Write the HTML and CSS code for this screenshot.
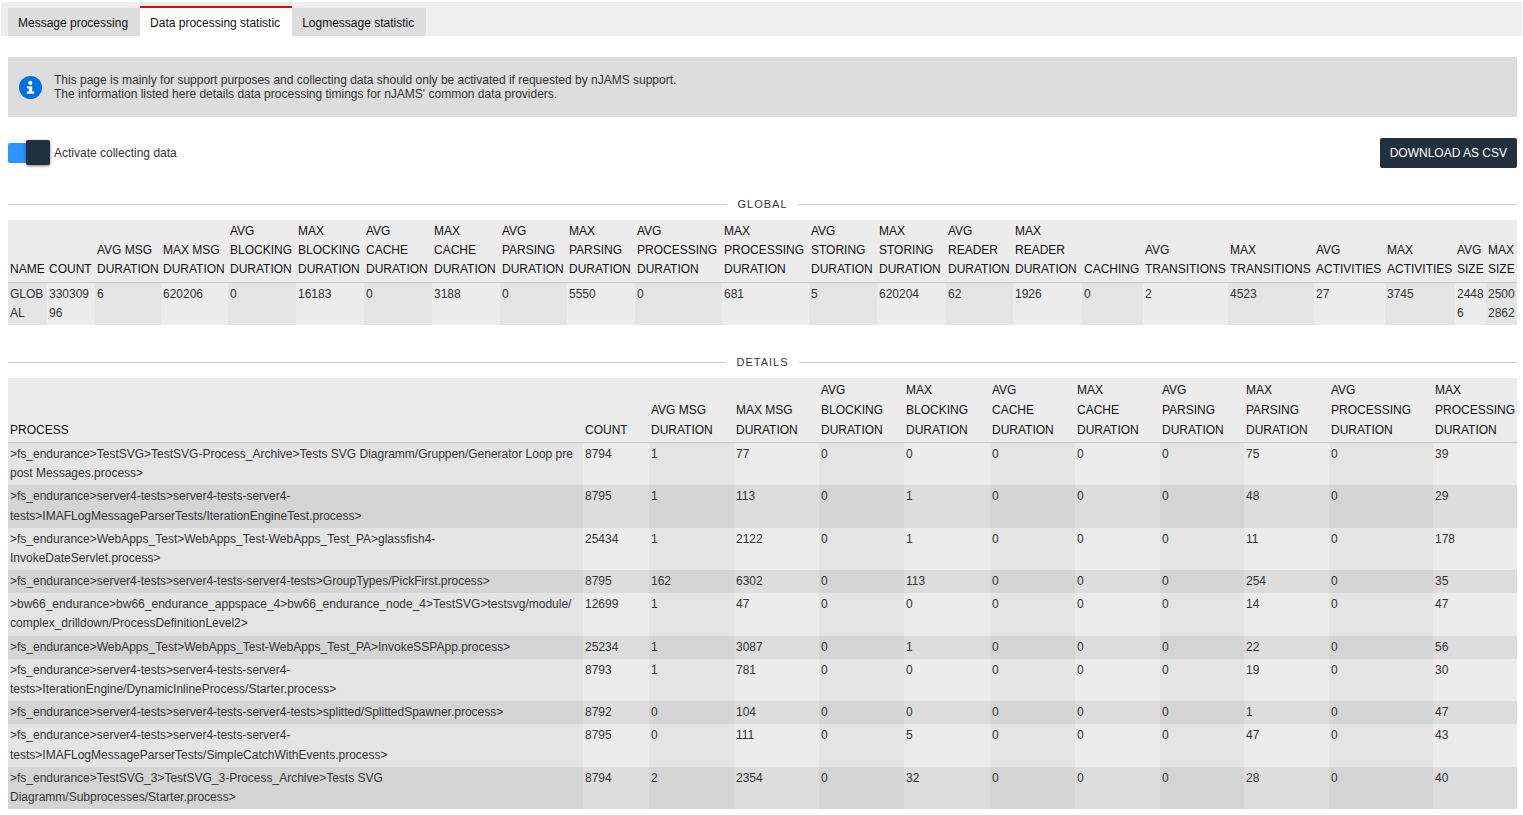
FILE: index.html
```html
<!DOCTYPE html>
<html lang="en">
<head>
<meta charset="utf-8">
<title>Data processing statistic</title>
<link rel="stylesheet" href="styles.css">
</head>
<body>
<nav class="tabs" role="tablist">
  <button class="tab" type="button" role="tab" aria-selected="false">Message processing</button>
  <button class="tab tab-active" type="button" role="tab" aria-selected="true">Data processing statistic</button>
  <button class="tab" type="button" role="tab" aria-selected="false">Logmessage statistic</button>
</nav>
<main class="content">
  <section class="info">
    <svg class="info-icon" viewBox="0 0 24 24" aria-hidden="true">
      <circle cx="12" cy="12" r="12" fill="#0070e0"/>
      <circle cx="11.800" cy="7.200" r="2.200" fill="#fff"/>
      <path d="M8.200 10.700h5.600v5.600h2v2.200H8.200v-2.200h2v-3.400h-2z" fill="#fff"/>
    </svg>
    <p class="info-text">This page is mainly for support purposes and collecting data should only be activated if requested by nJAMS support.<br>The information listed here details data processing timings for nJAMS' common data providers.</p>
  </section>
  <div class="toolbar">
    <label class="switch" for="collect"><input class="switch-input" id="collect" type="checkbox" checked>Activate collecting data</label>
    <button class="download" type="button">DOWNLOAD AS CSV</button>
  </div>
  <h2 class="divider">GLOBAL</h2>
  <table class="grid grid-global">
    <colgroup><col style="width:39px"><col style="width:48px"><col style="width:66px"><col style="width:67px"><col style="width:68px"><col style="width:68px"><col style="width:68px"><col style="width:68px"><col style="width:67px"><col style="width:68px"><col style="width:87px"><col style="width:87px"><col style="width:68px"><col style="width:69px"><col style="width:67px"><col style="width:69px"><col style="width:61px"><col style="width:85px"><col style="width:86px"><col style="width:71px"><col style="width:70px"><col style="width:31px"><col style="width:31px"></colgroup>
    <thead><tr><th>NAME</th><th>COUNT</th><th>AVG MSG DURATION</th><th>MAX MSG DURATION</th><th>AVG BLOCKING DURATION</th><th>MAX BLOCKING DURATION</th><th>AVG CACHE DURATION</th><th>MAX CACHE DURATION</th><th>AVG PARSING DURATION</th><th>MAX PARSING DURATION</th><th>AVG PROCESSING DURATION</th><th>MAX PROCESSING DURATION</th><th>AVG STORING DURATION</th><th>MAX STORING DURATION</th><th>AVG READER DURATION</th><th>MAX READER DURATION</th><th>CACHING</th><th>AVG TRANSITIONS</th><th>MAX TRANSITIONS</th><th>AVG ACTIVITIES</th><th>MAX ACTIVITIES</th><th>AVG SIZE</th><th>MAX SIZE</th></tr></thead>
    <tbody><tr><td>GLOBAL</td><td>33030996</td><td>6</td><td>620206</td><td>0</td><td>16183</td><td>0</td><td>3188</td><td>0</td><td>5550</td><td>0</td><td>681</td><td>5</td><td>620204</td><td>62</td><td>1926</td><td>0</td><td>2</td><td>4523</td><td>27</td><td>3745</td><td>24486</td><td>25002862</td></tr></tbody>
  </table>
  <h2 class="divider">DETAILS</h2>
  <table class="grid grid-details">
    <colgroup><col style="width:575px"><col style="width:66px"><col style="width:85px"><col style="width:85px"><col style="width:85px"><col style="width:86px"><col style="width:85px"><col style="width:85px"><col style="width:84px"><col style="width:85px"><col style="width:104px"><col style="width:84px"></colgroup>
    <thead><tr><th>PROCESS</th><th>COUNT</th><th>AVG MSG DURATION</th><th>MAX MSG DURATION</th><th>AVG BLOCKING DURATION</th><th>MAX BLOCKING DURATION</th><th>AVG<br>CACHE DURATION</th><th>MAX<br>CACHE DURATION</th><th>AVG PARSING DURATION</th><th>MAX PARSING DURATION</th><th>AVG PROCESSING DURATION</th><th>MAX PROCESSING DURATION</th></tr></thead>
    <tbody>
      <tr><td>&gt;fs_endurance&gt;TestSVG&gt;TestSVG-Process_Archive&gt;Tests SVG Diagramm/Gruppen/Generator Loop pre post Messages.process&gt;</td><td>8794</td><td>1</td><td>77</td><td>0</td><td>0</td><td>0</td><td>0</td><td>0</td><td>75</td><td>0</td><td>39</td></tr>
      <tr><td>&gt;fs_endurance&gt;server4-tests&gt;server4-tests-server4-tests&gt;IMAFLogMessageParserTests/IterationEngineTest.process&gt;</td><td>8795</td><td>1</td><td>113</td><td>0</td><td>1</td><td>0</td><td>0</td><td>0</td><td>48</td><td>0</td><td>29</td></tr>
      <tr><td>&gt;fs_endurance&gt;WebApps_Test&gt;WebApps_Test-WebApps_Test_PA&gt;glassfish4-InvokeDateServlet.process&gt;</td><td>25434</td><td>1</td><td>2122</td><td>0</td><td>1</td><td>0</td><td>0</td><td>0</td><td>11</td><td>0</td><td>178</td></tr>
      <tr><td>&gt;fs_endurance&gt;server4-tests&gt;server4-tests-server4-tests&gt;GroupTypes/PickFirst.process&gt;</td><td>8795</td><td>162</td><td>6302</td><td>0</td><td>113</td><td>0</td><td>0</td><td>0</td><td>254</td><td>0</td><td>35</td></tr>
      <tr><td>&gt;bw66_endurance&gt;bw66_endurance_appspace_4&gt;bw66_endurance_node_4&gt;TestSVG&gt;testsvg/module/<wbr>complex_drilldown/ProcessDefinitionLevel2&gt;</td><td>12699</td><td>1</td><td>47</td><td>0</td><td>0</td><td>0</td><td>0</td><td>0</td><td>14</td><td>0</td><td>47</td></tr>
      <tr><td>&gt;fs_endurance&gt;WebApps_Test&gt;WebApps_Test-WebApps_Test_PA&gt;InvokeSSPApp.process&gt;</td><td>25234</td><td>1</td><td>3087</td><td>0</td><td>1</td><td>0</td><td>0</td><td>0</td><td>22</td><td>0</td><td>56</td></tr>
      <tr><td>&gt;fs_endurance&gt;server4-tests&gt;server4-tests-server4-tests&gt;IterationEngine/DynamicInlineProcess/Starter.process&gt;</td><td>8793</td><td>1</td><td>781</td><td>0</td><td>0</td><td>0</td><td>0</td><td>0</td><td>19</td><td>0</td><td>30</td></tr>
      <tr><td>&gt;fs_endurance&gt;server4-tests&gt;server4-tests-server4-tests&gt;splitted/SplittedSpawner.process&gt;</td><td>8792</td><td>0</td><td>104</td><td>0</td><td>0</td><td>0</td><td>0</td><td>0</td><td>1</td><td>0</td><td>47</td></tr>
      <tr><td>&gt;fs_endurance&gt;server4-tests&gt;server4-tests-server4-tests&gt;IMAFLogMessageParserTests/SimpleCatchWithEvents.process&gt;</td><td>8795</td><td>0</td><td>111</td><td>0</td><td>5</td><td>0</td><td>0</td><td>0</td><td>47</td><td>0</td><td>43</td></tr>
      <tr><td>&gt;fs_endurance&gt;TestSVG_3&gt;TestSVG_3-Process_Archive&gt;Tests SVG Diagramm/Subprocesses/Starter.process&gt;</td><td>8794</td><td>2</td><td>2354</td><td>0</td><td>32</td><td>0</td><td>0</td><td>0</td><td>28</td><td>0</td><td>40</td></tr>
    </tbody>
  </table>
</main>
</body>
</html>
```

FILE: styles.css
```css
* {
  box-sizing: border-box;
}

body {
  margin: 0;
  background: #fff;
  color: #333;
  font-family: "Liberation Sans", Arial, sans-serif;
  font-size: 12px;
}

button {
  font: inherit;
  border: 0;
  cursor: pointer;
}

.tabs {
  display: flex;
  align-items: flex-end;
  height: 34px;
  margin: 2px 1px 0;
  padding-left: 7px;
  background: #eee;
}

.tab {
  height: 28px;
  padding: 2px 12px 0 10px;
  background: #ddd;
  color: #111;
}

.tab-active {
  height: 30px;
  border-top: 2px solid #cc1111;
  background: #fff;
}

.content {
  padding: 21px 6px 0 8px;
}

.info {
  display: flex;
  align-items: center;
  gap: 12px;
  min-height: 60px;
  padding: 0 11px;
  background: #ddd;
}

.info-icon {
  width: 23px;
  height: 23px;
}

.info-text {
  margin: 0;
  line-height: 14px;
}

.toolbar {
  display: flex;
  align-items: center;
  justify-content: space-between;
  margin-top: 21px;
}

.switch {
  display: flex;
  align-items: center;
  gap: 4px;
}

.switch-input {
  appearance: none;
  position: relative;
  width: 42px;
  height: 20px;
  margin: 0;
  border-radius: 2px;
  background: #2a94ff;
}

.switch-input::after {
  content: "";
  position: absolute;
  right: 0;
  top: -3px;
  width: 24px;
  height: 25px;
  border-radius: 2px;
  background: #222f3c;
  box-shadow: 0 1px 3px rgba(0, 0, 0, 0.5);
}

.download {
  height: 30px;
  padding: 0 10px;
  border-radius: 2px;
  background: #222f3c;
  color: #fff;
}

.divider {
  display: flex;
  align-items: center;
  gap: 10px;
  margin: 31px 0 9px;
  font-size: 11px;
  font-weight: 400;
  line-height: 13px;
  letter-spacing: 1px;
}

.toolbar + .divider {
  margin-top: 30px;
}

.divider::before,
.divider::after {
  content: "";
  flex: 1;
  height: 1px;
  background: #ccc;
}

.grid {
  width: 100%;
  table-layout: fixed;
  border-spacing: 0;
  line-height: 1.6;
}

.grid th,
.grid td {
  padding: 2px;
  text-align: left;
  overflow-wrap: anywhere;
}

.grid th {
  border-bottom: 1px solid #c4c4c4;
  background: #ececec;
  color: #111;
  font-weight: 400;
  vertical-align: bottom;
}

.grid-details th {
  line-height: 20px;
}

.grid td {
  vertical-align: top;
  background: #ececec;
}

.grid tr td:nth-child(odd) {
  background: #e4e4e4;
}

.grid tr:nth-child(even) td {
  background: #ddd;
}

.grid tr:nth-child(even) td:nth-child(odd) {
  background: #d4d4d4;
}
```
